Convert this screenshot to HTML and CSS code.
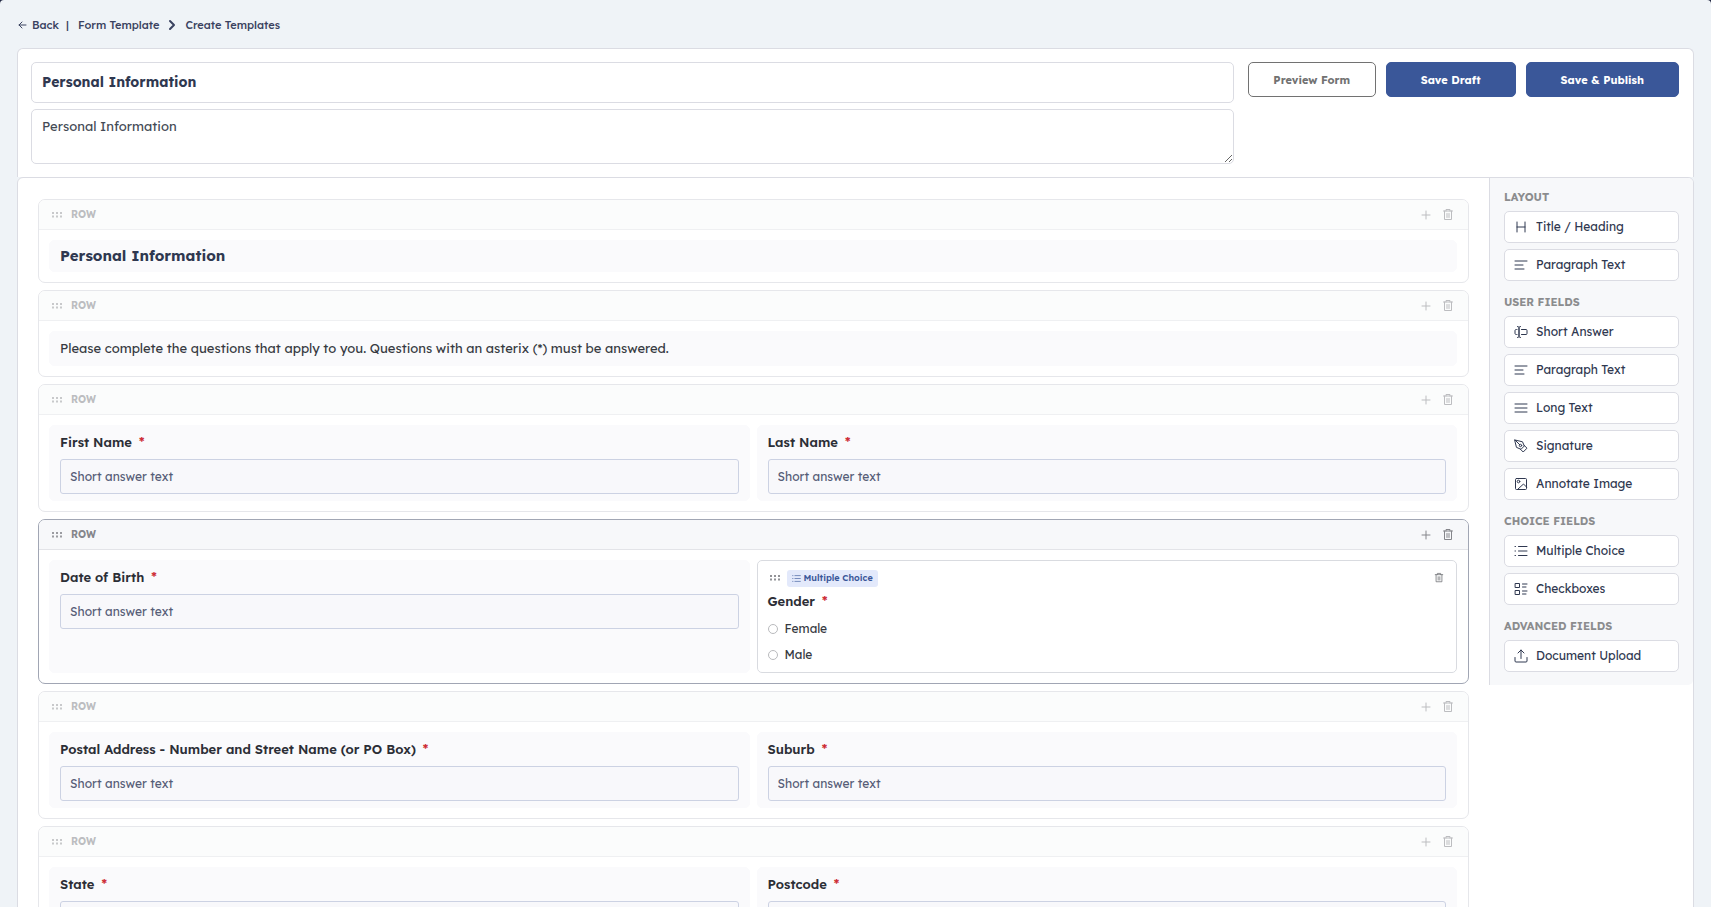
FILE: index.html
```html
<!DOCTYPE html>
<html lang="en">
<head>
<meta charset="utf-8">
<meta name="viewport" content="width=device-width, initial-scale=1">
<title>Create Templates</title>
<link rel="stylesheet" href="styles.css">
</head>
<body>
<svg class="sprite" aria-hidden="true">
  <symbol id="i-back" viewBox="0 0 12 12"><path d="M9 6H2M5 3 2 6l3 3"/></symbol>
  <symbol id="i-next" viewBox="0 0 12 12"><path d="m4 2 4 4-4 4"/></symbol>
  <symbol id="i-grip" viewBox="0 0 10 6"><g fill="currentColor" stroke="none"><rect x="0" y="0" width="2" height="2"/><rect x="4" y="0" width="2" height="2"/><rect x="8" y="0" width="2" height="2"/><rect x="0" y="3.500" width="2" height="2"/><rect x="4" y="3.500" width="2" height="2"/><rect x="8" y="3.500" width="2" height="2"/></g></symbol>
  <symbol id="i-plus" viewBox="0 0 12 12"><path d="M6 2v8M2 6h8"/></symbol>
  <symbol id="i-trash" viewBox="0 0 12 14"><path d="M1.500 3h9M4 3V1.500h4V3M2.500 3v8.500h7V3M5 5.500v4M7 5.500v4"/></symbol>
  <symbol id="i-heading" viewBox="0 0 14 14"><path d="M3 2v10M11 2v10M3 7h8"/></symbol>
  <symbol id="i-para" viewBox="0 0 14 14"><path d="M1 3h12M1 7h8M1 11h9"/></symbol>
  <symbol id="i-long" viewBox="0 0 14 14"><path d="M1 3h12M1 7h12M1 11h12"/></symbol>
  <symbol id="i-short" viewBox="0 0 14 14"><path d="M3.500 1.500q1.500 0 1.500 1v9q0 1-1.500 1M6.500 1.500q-1.500 0-1.500 1v9q0 1 1.500 1M3 4.500H2.500q-1.500 0-1.500 1v3q0 1 1.500 1H3M7.500 4.500H12q1 0 1 1v3q0 1-1 1H7.500"/></symbol>
  <symbol id="i-pen" viewBox="0 0 14 14"><path d="m1 1 7.500 1.800 1.800 4.200-3.300 3.300-4.200-1.800zM1 1l4.800 4.800M10.300 6.500l2.700 2.700-3.800 3.800-2.700-2.700"/><circle cx="6.500" cy="6.500" r="1.200"/></symbol>
  <symbol id="i-image" viewBox="0 0 14 14"><rect x="1.500" y="1.500" width="11" height="11" rx="1"/><circle cx="4.500" cy="4.500" r="1.300"/><path d="m3.500 12.500 6-5.500 3 3"/></symbol>
  <symbol id="i-list" viewBox="0 0 14 14"><path d="M4.500 2.500H13M4.500 7H13M4.500 11.500H13M1 2.500h.5M1 7h.5M1 11.500h.5"/></symbol>
  <symbol id="i-checks" viewBox="0 0 14 14"><path d="M1.500 1.500h4v4h-4zM1.500 8.500h4v4h-4zM8.500 2H13M8.500 5H12M8.500 9H13M8.500 12H12"/></symbol>
  <symbol id="i-upload" viewBox="0 0 14 14"><path d="M7 9.500V1M4 4l3-3 3 3M1 8.500V12q0 1 1 1h10q1 0 1-1V8.500"/></symbol>
</svg>

<div class="page">
  <nav class="crumbs" aria-label="Breadcrumb">
    <a class="crumb-back" href="#"><svg class="icon-s"><use href="#i-back"/></svg>Back</a>
    <span>|</span>
    <a class="crumb-link" href="#">Form Template</a>
    <svg class="icon-s crumb-sep"><use href="#i-next"/></svg>
    <a href="#">Create Templates</a>
  </nav>

  <header class="top">
    <div class="meta">
      <input class="form-title" type="text" aria-label="Form title" value="Personal Information">
      <textarea class="form-desc" aria-label="Form description">Personal Information</textarea>
    </div>
    <div class="actions">
      <button class="btn btn-outline" type="button">Preview Form</button>
      <button class="btn" type="button">Save Draft</button>
      <button class="btn" type="button">Save &amp; Publish</button>
    </div>
  </header>

  <main class="builder">
    <div class="rows">
      <section class="row">
        <div class="row-head"><svg class="grip"><use href="#i-grip"/></svg><span>ROW</span>
          <button class="tool" type="button" aria-label="Add field"><svg class="icon-s"><use href="#i-plus"/></svg></button>
          <button class="tool" type="button" aria-label="Delete row"><svg class="icon-t"><use href="#i-trash"/></svg></button></div>
        <div class="cells"><div class="cell cell-text"><h2>Personal Information</h2></div></div>
      </section>

      <section class="row">
        <div class="row-head"><svg class="grip"><use href="#i-grip"/></svg><span>ROW</span>
          <button class="tool" type="button" aria-label="Add field"><svg class="icon-s"><use href="#i-plus"/></svg></button>
          <button class="tool" type="button" aria-label="Delete row"><svg class="icon-t"><use href="#i-trash"/></svg></button></div>
        <div class="cells"><div class="cell cell-text"><p>Please complete the questions that apply to you. Questions with an asterix (*) must be answered.</p></div></div>
      </section>

      <section class="row">
        <div class="row-head"><svg class="grip"><use href="#i-grip"/></svg><span>ROW</span>
          <button class="tool" type="button" aria-label="Add field"><svg class="icon-s"><use href="#i-plus"/></svg></button>
          <button class="tool" type="button" aria-label="Delete row"><svg class="icon-t"><use href="#i-trash"/></svg></button></div>
        <div class="cells">
          <div class="cell"><label class="label" for="first">First Name <b>*</b></label><input class="answer" id="first" type="text" placeholder="Short answer text"></div>
          <div class="cell"><label class="label" for="last">Last Name <b>*</b></label><input class="answer" id="last" type="text" placeholder="Short answer text"></div>
        </div>
      </section>

      <section class="row row-active">
        <div class="row-head"><svg class="grip"><use href="#i-grip"/></svg><span>ROW</span>
          <button class="tool" type="button" aria-label="Add field"><svg class="icon-s"><use href="#i-plus"/></svg></button>
          <button class="tool" type="button" aria-label="Delete row"><svg class="icon-t"><use href="#i-trash"/></svg></button></div>
        <div class="cells">
          <div class="cell"><label class="label" for="dob">Date of Birth <b>*</b></label><input class="answer" id="dob" type="text" placeholder="Short answer text"></div>
          <fieldset class="cell cell-active">
            <div class="cell-head"><svg class="grip"><use href="#i-grip"/></svg><span class="badge"><svg><use href="#i-list"/></svg>Multiple Choice</span>
              <button class="tool" type="button" aria-label="Delete field"><svg class="icon-u"><use href="#i-trash"/></svg></button></div>
            <div class="label" id="gender">Gender <b>*</b></div>
            <div class="options" role="radiogroup" aria-labelledby="gender">
              <label class="option"><input type="radio" name="gender">Female</label>
              <label class="option"><input type="radio" name="gender">Male</label>
            </div>
          </fieldset>
        </div>
      </section>

      <section class="row">
        <div class="row-head"><svg class="grip"><use href="#i-grip"/></svg><span>ROW</span>
          <button class="tool" type="button" aria-label="Add field"><svg class="icon-s"><use href="#i-plus"/></svg></button>
          <button class="tool" type="button" aria-label="Delete row"><svg class="icon-t"><use href="#i-trash"/></svg></button></div>
        <div class="cells">
          <div class="cell"><label class="label" for="street">Postal Address - Number and Street Name (or PO Box) <b>*</b></label><input class="answer" id="street" type="text" placeholder="Short answer text"></div>
          <div class="cell"><label class="label" for="suburb">Suburb <b>*</b></label><input class="answer" id="suburb" type="text" placeholder="Short answer text"></div>
        </div>
      </section>

      <section class="row">
        <div class="row-head"><svg class="grip"><use href="#i-grip"/></svg><span>ROW</span>
          <button class="tool" type="button" aria-label="Add field"><svg class="icon-s"><use href="#i-plus"/></svg></button>
          <button class="tool" type="button" aria-label="Delete row"><svg class="icon-t"><use href="#i-trash"/></svg></button></div>
        <div class="cells">
          <div class="cell"><label class="label" for="state">State <b>*</b></label><input class="answer" id="state" type="text" placeholder="Short answer text"></div>
          <div class="cell"><label class="label" for="postcode">Postcode <b>*</b></label><input class="answer" id="postcode" type="text" placeholder="Short answer text"></div>
        </div>
      </section>
    </div>

    <aside class="palette">
      <section class="group"><h3>LAYOUT</h3>
        <button class="item" type="button"><svg><use href="#i-heading"/></svg>Title / Heading</button>
        <button class="item" type="button"><svg><use href="#i-para"/></svg>Paragraph Text</button></section>
      <section class="group"><h3>USER FIELDS</h3>
        <button class="item" type="button"><svg><use href="#i-short"/></svg>Short Answer</button>
        <button class="item" type="button"><svg><use href="#i-para"/></svg>Paragraph Text</button>
        <button class="item" type="button"><svg><use href="#i-long"/></svg>Long Text</button>
        <button class="item" type="button"><svg><use href="#i-pen"/></svg>Signature</button>
        <button class="item" type="button"><svg><use href="#i-image"/></svg>Annotate Image</button></section>
      <section class="group"><h3>CHOICE FIELDS</h3>
        <button class="item" type="button"><svg><use href="#i-list"/></svg>Multiple Choice</button>
        <button class="item" type="button"><svg><use href="#i-checks"/></svg>Checkboxes</button></section>
      <section class="group"><h3>ADVANCED FIELDS</h3>
        <button class="item" type="button"><svg><use href="#i-upload"/></svg>Document Upload</button></section>
    </aside>
  </main>
</div>
</body>
</html>
```
FILE: styles.css
```css
* { box-sizing: border-box; }

html { background: #1f2540; }

body {
  margin: 0;
  font-family: Lexend, Inter, "Open Sans", sans-serif;
  font-size: 13px;
  line-height: 20px;
  color: #2f3850;
}

button, input, textarea { font: inherit; color: inherit; margin: 0; }
button { cursor: pointer; }
a { color: inherit; text-decoration: none; }
svg { flex: none; fill: none; stroke: currentColor; stroke-linecap: round; stroke-linejoin: round; }
h2, h3, p { margin: 0; }

.sprite { display: none; }

.page {
  height: 100vh;
  overflow-y: auto;
  scrollbar-width: none;
  padding: 0 17px;
  background: #eff3f7;
  border-radius: 4px 4px 0 0;
}

.icon-s { width: 12px; height: 12px; }
.icon-t { width: 12px; height: 14px; }
.icon-u { width: 10px; height: 12px; }
.grip { width: 10px; height: 6px; opacity: 0.8; }

.crumbs {
  display: flex;
  align-items: center;
  gap: 7px;
  height: 48px;
  padding-top: 2px;
  font-size: 11px;
  font-weight: 500;
  color: #3a4260;
}
.crumb-back { display: flex; align-items: center; gap: 3px; }
.crumb-link { padding-left: 2px; }
.crumb-sep { stroke-width: 2; }

.top {
  display: flex;
  align-items: flex-start;
  gap: 14px;
  padding: 13px 14px 13px 13px;
  background: #fff;
  border: 1px solid #dbdce3;
  border-bottom: 0;
  border-radius: 6px 6px 0 0;
}
.meta { display: flex; flex-direction: column; gap: 6px; flex: 1; }
.form-title, .form-desc {
  width: 100%;
  padding: 0 10px;
  border: 1px solid #dbdce3;
  border-radius: 5px;
  background: #fff;
}
.form-title { height: 41px; padding-bottom: 2px; font-size: 14px; font-weight: 700; }
.form-desc { display: block; height: 55px; padding-top: 6px; resize: vertical; color: #444a55; }

.actions { display: flex; gap: 10px; }
.btn {
  height: 35px;
  min-width: 128px;
  padding: 0 34px;
  border: 1px solid #3a5799;
  border-radius: 5px;
  background: #3a5799;
  color: #fff;
  font-size: 11px;
  font-weight: 700;
}
.btn-outline { padding: 0 24px; border-color: #727272; background: #fff; color: #727272; }

.builder {
  display: flex;
  align-items: flex-start;
  background: #fff;
  border: 1px solid #dbdce3;
  border-radius: 6px 6px 0 0;
}
.rows { flex: 1; display: flex; flex-direction: column; gap: 7px; padding: 21px 20px; }

.row { border: 1px solid #e6e7eb; border-radius: 7px; overflow: hidden; }
.row-head {
  display: flex;
  align-items: center;
  gap: 9px;
  height: 30px;
  padding: 0 14px 0 13px;
  background: #fbfcfc;
  border-bottom: 1px solid #eff0f2;
  color: #bcbdc0;
  font-size: 10px;
  font-weight: 700;
}
.row-head span { flex: 1; }
.tool { display: flex; padding: 0; border: 0; background: none; color: inherit; }
.row-head .tool + .tool { margin-left: 1px; }
.row-active { border-color: #a1a6b4; }
.row-active .row-head { background: #f7f8fa; border-color: #e3e4e8; color: #85868b; }

.cells { display: flex; gap: 7px; padding: 10px 11px 10px 10px; }
.cell {
  flex: 1 1 0;
  min-width: 0;
  margin: 0;
  padding: 6px 10px;
  border: 1px solid #fafafc;
  border-radius: 5px;
  background: #fafafc;
}
.cell-text { padding: 5px 10px; }
.cell-text h2 { font-size: 15px; font-weight: 700; line-height: 20px; }
.cell-text p { line-height: 23px; color: #373a42; }

.label { display: block; height: 20px; margin-bottom: 7px; font-weight: 600; color: #2c2e36; }
.label b { margin-left: 3px; font-weight: 600; color: #cd2c35; }
.answer {
  display: block;
  width: 100%;
  height: 35px;
  padding: 0 9px;
  border: 1px solid #ccd2e3;
  border-radius: 3px;
  background: #f8f8fb;
  font-size: 12px;
}
.answer::placeholder { color: #565d77; opacity: 1; }

.cell-active { padding: 8px 10px 7px; border-color: #d9dbe0; background: #fff; }
.cell-head { display: flex; align-items: center; gap: 7px; height: 18px; padding: 0 2px; margin-bottom: 4px; color: #77787d; }
.cell-head .tool { margin-left: auto; }
.badge {
  display: flex;
  align-items: center;
  gap: 3px;
  height: 17px;
  padding: 0 5px;
  border-radius: 3px;
  background: #e3e9fb;
  color: #3a5799;
  font-size: 9px;
  font-weight: 600;
}
.badge svg { width: 9px; height: 9px; }
.options { display: flex; flex-direction: column; gap: 6px; }
.option { display: flex; align-items: center; gap: 7px; height: 20px; font-size: 12px; color: #373a42; }
.option input { appearance: none; width: 10px; height: 10px; border: 1px solid #b9babd; border-radius: 50%; }
.cell-active .label { margin-bottom: 8px; }

.palette {
  display: flex;
  flex-direction: column;
  gap: 13px;
  width: 204px;
  padding: 11px 14px 13px;
  background: #f7f8fa;
  border-left: 1px solid #dbdce3;
  border-radius: 0 5px 5px 0;
}
.group { display: flex; flex-direction: column; gap: 6px; }
.group h3 { font-size: 11px; line-height: 16px; font-weight: 700; color: #8b8c8e; }
.item {
  display: flex;
  align-items: center;
  gap: 8px;
  height: 32px;
  padding: 0 9px;
  border: 1px solid #dbdce3;
  border-radius: 5px;
  background: #fff;
  font-size: 12px;
}
.item svg { width: 14px; height: 14px; }
```
